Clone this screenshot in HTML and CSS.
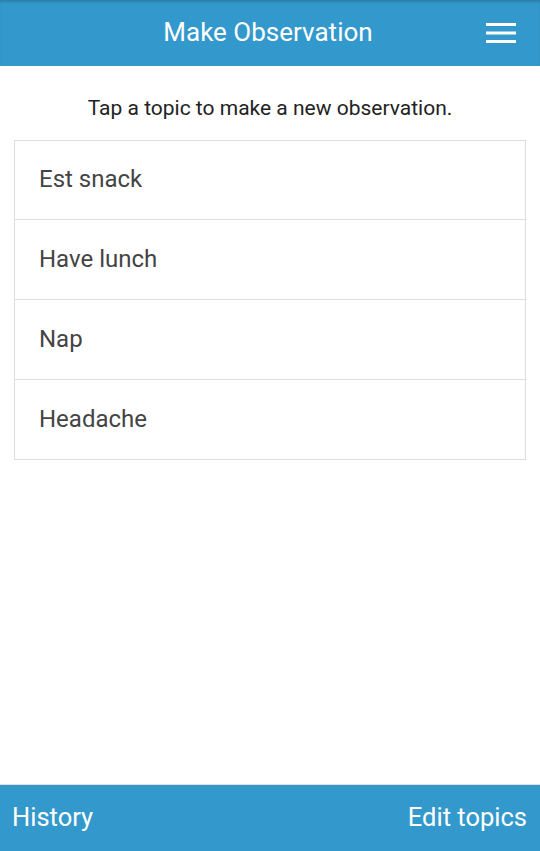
FILE: index.html
```html
<!DOCTYPE html>
<html>
<head>
<meta charset="utf-8">
<link rel="stylesheet" href="styles.css">
</head>
<body>
<div class="app">
  <header class="topbar">
    <h1 class="title">Make Observation</h1>
    <button class="menu" aria-label="Menu">
      <svg width="30" height="22" viewBox="0 0 30 22"><rect x="0" y="1" width="30" height="3" fill="#fff"/><rect x="0" y="9.5" width="30" height="3" fill="#fff"/><rect x="0" y="18" width="30" height="3" fill="#fff"/></svg>
    </button>
  </header>
  <main class="content">
    <p class="hint">Tap a topic to make a new observation.</p>
    <ul class="topics">
      <li class="topic">Est snack</li>
      <li class="topic">Have lunch</li>
      <li class="topic">Nap</li>
      <li class="topic">Headache</li>
    </ul>
  </main>
  <footer class="bottombar">
    <span class="link">History</span>
    <span class="link">Edit topics</span>
  </footer>
</div>
</body>
</html>
```
FILE: styles.css
```css
* { box-sizing: border-box; }
html, body { margin: 0; padding: 0; height: 100%; }
body { font-family: Roboto, "Noto Sans", sans-serif; background: #fff; }
.app { display: flex; flex-direction: column; height: 851px; }
.topbar {
  height: 66px;
  background: #3399cc;
  box-shadow: inset 0 3px 3px -1px rgba(0,0,0,0.18);
  display: flex;
  align-items: center;
  justify-content: center;
  position: relative;
  flex: none;
}
.title { margin: 0 4px 2px 0; color: #fff; font-weight: 400; font-size: 26px; }
.menu {
  position: absolute; right: 24px; top: 22px;
  background: none; border: 0; padding: 0; line-height: 0;
}
.content { flex: 1; padding: 0 14px; }
.hint { margin: 0; padding-top: 30px; height: 74px; text-align: center; font-size: 21px; color: #222; }
.topics { list-style: none; margin: 0; padding: 0; border: 1px solid #dddddd; }
.topic {
  height: 80px; display: flex; align-items: center; padding: 0 0 2px 24px;
  font-size: 24px; color: #444;
  border-top: 1px solid #dddddd;
}
.topic:first-child { border-top: 0; height: 78px; }
.bottombar {
  height: 67px; flex: none;
  background: #3399cc;
  border-top: 1px solid #e0e0e0;
  display: flex; align-items: center; justify-content: space-between;
  padding: 0 13px 2px 12px;
  color: #fff; font-size: 25.5px;
}
```
